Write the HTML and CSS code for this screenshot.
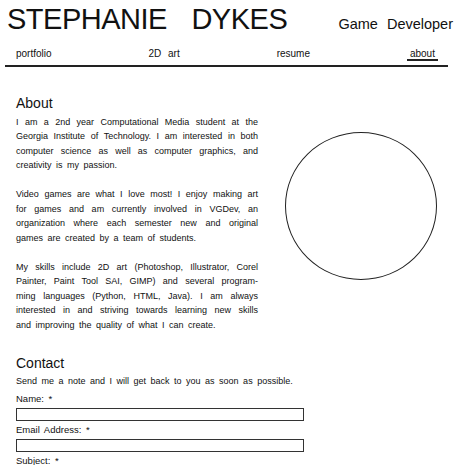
FILE: index.html
```html
<!DOCTYPE html>
<html lang="en">
<head>
    <meta charset="UTF-8">
    <meta name="viewport" content="width=device-width, initial-scale=1.0">
    <title>Stephanie Dykes</title>
    <link rel="stylesheet" href="styles.css">
</head>
<body>
    <div id="header">
        <h1 id="name">STEPHANIE DYKES</h1>
        <span id="role">Game Developer</span>
    </div>

    <div id="nav">
        <a href="#">portfolio</a>
        <a href="#">2D art</a>
        <a href="#">resume</a>
        <a href="#" class="active">about</a>
    </div>

    <div id="about">
        <div class="about-text">
            <h2>About</h2>
            <p>I am a 2nd year Computational Media student at the Georgia Institute of Technology. I am interested in both computer science as well as computer graphics, and creativity is my passion.</p>
            <p>Video games are what I love most! I enjoy making art for games and am currently involved in VGDev, an organization where each semester new and original games are created by a team of students.</p>
            <p>My skills include 2D art (Photoshop, Illustrator, Corel Painter, Paint Tool SAI, GIMP) and several program- ming languages (Python, HTML, Java). I am always interested in and striving towards learning new skills and&nbsp;improving the quality of what I can create.</p>
        </div>
        <div id="photo"></div>
    </div>

    <div id="contact">
        <h2>Contact</h2>
        <p>Send me a note and I will get back to you as soon as possible.</p>
        <form>
            <label for="name-field">Name: *</label>
            <input type="text" id="name-field">
            <label for="email-field">Email Address: *</label>
            <input type="text" id="email-field">
            <label for="subject-field">Subject: *</label>
        </form>
    </div>
</body>
</html>
```

FILE: styles.css
```css
body {
    font-family: 'Liberation Sans', Arial, sans-serif;
    background-color: #fff;
    color: #111;
    margin: 0;
    padding: 0;
}

#header {
    display: flex;
    justify-content: space-between;
    align-items: baseline;
    padding: 4px 12px 0 7px;
    height: 34px;
}

#name {
    margin: 0;
    font-weight: normal;
    font-size: 29px;
    letter-spacing: -0.5px;
    word-spacing: 17px;
    line-height: 30px;
}

#role {
    font-size: 14.5px;
    word-spacing: 5px;
}

#nav {
    display: flex;
    justify-content: space-between;
    margin: 10px 17px 0 5px;
    padding: 0 13px 4px 11px;
    border-bottom: 2px solid #222;
}

#nav a {
    color: #111;
    text-decoration: none;
    font-size: 10px;
    word-spacing: 4px;
}

#nav a.active {
    border-bottom: 2px solid #222;
    padding: 0 3px;
    margin-right: -3px;
}

h2 {
    font-weight: normal;
    font-size: 14px;
    line-height: 16px;
    margin: 0 0 3.5px;
}

#about {
    display: flex;
    padding: 28px 0 0 16px;
}

.about-text {
    width: 242px;
}

.about-text p,
#contact p {
    font-size: 9px;
    line-height: 14.5px;
    word-spacing: 2px;
    text-align: justify;
    margin: 0 0 14.5px;
}

#photo {
    width: 150px;
    height: 146px;
    border: 1.5px solid #222;
    border-radius: 50%;
    margin: 37px 0 0 27px;
}

#contact {
    padding: 8px 0 0 16px;
}

#contact p {
    margin-bottom: 4px;
}

form label {
    display: block;
    font-size: 9.5px;
    word-spacing: 2px;
    line-height: 12px;
    margin-bottom: 3px;
}

form input {
    display: block;
    width: 286px;
    height: 11px;
    border: 1.5px solid #333;
    margin: 0 0 3px;
    padding: 0;
}
```
